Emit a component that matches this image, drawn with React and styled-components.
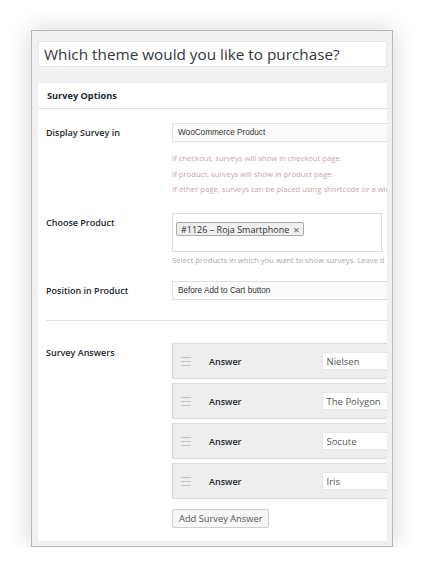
import React from "react";
import styled, { createGlobalStyle } from "styled-components";

const GlobalStyle = createGlobalStyle`
  html, body {
    margin: 0;
    padding: 0;
    background: #fff;
  }
  * {
    box-sizing: border-box;
  }
`;

const Page = styled.div`
  padding: 30px 0 0 31px;
  font-family: "Open Sans", "Liberation Sans", sans-serif;
`;

const Frame = styled.div`
  width: 362px;
  height: 517px;
  border: 1px solid #b8b8b8;
  background: #f1f1f1;
  box-shadow: 0 0 22px rgba(0, 0, 0, 0.16);
  padding: 10px 5px 5px 6px;
  display: flex;
  flex-direction: column;
`;

const TitleBox = styled.div`
  height: 26px;
  background: #fff;
  border: 1px solid #e8e8e8;
  padding-left: 5px;
  display: flex;
  align-items: center;
  font-size: 15.3px;
  color: #32373c;
  white-space: nowrap;
  overflow: hidden;
`;

const Panel = styled.div`
  margin-top: 16px;
  flex: 1;
  background: #fff;
  overflow: hidden;
`;

const PanelHeader = styled.div`
  height: 26px;
  border-bottom: 1px solid #e3e3e3;
  padding-left: 9px;
  display: flex;
  align-items: center;
  font-size: 9.2px;
  font-weight: 700;
  color: #23282d;
`;

const PanelBody = styled.div`
  padding: 14px 0 0 8px;
`;

const Row = styled.div`
  display: flex;
  align-items: flex-start;
  margin-bottom: ${(p) => p.$gap || 0}px;
`;

const Label = styled.div`
  width: 126px;
  flex: none;
  font-size: 9px;
  font-weight: 600;
  color: #23282d;
  line-height: 19px;
  padding-top: ${(p) => p.$top || 0}px;
`;

const Field = styled.div`
  flex: none;
  width: 260px;
`;

const Select = styled.div`
  height: 19px;
  width: 260px;
  border: 1px solid #e1e1e1;
  background: #fbfbfb;
  padding-left: 5px;
  display: flex;
  align-items: center;
  font-family: "Liberation Sans", Arial, sans-serif;
  font-size: 8.2px;
  color: #333;
`;

const Desc = styled.div`
  font-size: 7.7px;
  line-height: 15.5px;
  color: ${(p) => p.$tone || "#aaa"};
  white-space: nowrap;
`;

const DescList = styled.div`
  margin-top: 9px;
`;

const MultiBox = styled.div`
  width: 210px;
  height: 39px;
  border: 1px solid #dcdcdc;
  padding: 2px 3px;
`;

const Tag = styled.span`
  display: inline-flex;
  align-items: center;
  gap: 4px;
  height: 14px;
  padding: 0 3px 0 4px;
  border: 1px solid #aaa;
  border-radius: 2px;
  background: #efefef;
  font-size: 9px;
  color: #333;
`;

const TagClose = styled.span`
  font-weight: 700;
  font-size: 11px;
  line-height: 1;
  color: #888;
`;

const Separator = styled.div`
  height: 1px;
  background: #e5e5e5;
  margin: 20px 0 22px 0;
  width: 345px;
`;

const AnswerList = styled.div`
  display: flex;
  flex-direction: column;
  gap: 4px;
`;

const AnswerItem = styled.div`
  height: 36px;
  width: 260px;
  background: #eeeeee;
  border: 1px solid #dcdcdc;
  border-left-color: #d4d4d4;
  display: flex;
  align-items: center;
  padding-left: 8px;
`;

const Handle = styled.svg`
  width: 10px;
  height: 9px;
  flex: none;
`;

const AnswerLabel = styled.span`
  margin-left: 18px;
  width: 124px;
  font-size: 9px;
  font-weight: 600;
  color: #23282d;
`;

const AnswerInput = styled.div`
  height: 18px;
  width: 120px;
  background: #fff;
  border: 1px solid #e6e6e6;
  padding-left: 4px;
  display: flex;
  align-items: center;
  font-size: 9.5px;
  color: #555;
  white-space: nowrap;
`;

const AddButton = styled.button`
  margin-top: 10px;
  height: 19px;
  padding: 0 6px;
  border: 1px solid #cfcfcf;
  border-radius: 2px;
  background: #f7f7f7;
  font-family: "Open Sans", sans-serif;
  font-size: 9.3px;
  color: #555;
`;

const HandleIcon = () => (
  <Handle viewBox="0 0 10 9">
    <rect x="0" y="0" width="10" height="1" fill="#c4c4c4" />
    <rect x="0" y="4" width="10" height="1" fill="#c4c4c4" />
    <rect x="0" y="8" width="10" height="1" fill="#c4c4c4" />
  </Handle>
);

const answers = ["Nielsen", "The Polygon", "Socute", "Iris"];

export default function App() {
  return (
    <Page>
      <GlobalStyle />
      <Frame>
        <TitleBox>Which theme would you like to purchase?</TitleBox>
        <Panel>
          <PanelHeader>Survey Options</PanelHeader>
          <PanelBody>
            <Row $gap={15}>
              <Label>Display Survey in</Label>
              <Field>
                <Select>WooCommerce Product</Select>
                <DescList>
                  <Desc $tone="#bfa9a9">If checkout, surveys will show in checkout page.</Desc>
                  <Desc $tone="#bfa9a9">If product, surveys will show in product page.</Desc>
                  <Desc $tone="#bfa9a9">
                    If other page, surveys can be placed using shortcode or a widget.
                  </Desc>
                </DescList>
              </Field>
            </Row>
            <Row $gap={13}>
              <Label $top={-2}>Choose Product</Label>
              <Field>
                <MultiBox>
                  <Tag>
                    #1126 – Roja Smartphone <TagClose>×</TagClose>
                  </Tag>
                </MultiBox>
                <Desc style={{ marginTop: "1px" }}>
                  Select products in which you want to show surveys. Leave it blank for all products.
                </Desc>
              </Field>
            </Row>
            <Row>
              <Label>Position in Product</Label>
              <Field>
                <Select>Before Add to Cart button</Select>
              </Field>
            </Row>
            <Separator />
            <Row>
              <Label>Survey Answers</Label>
              <Field>
                <AnswerList>
                  {answers.map((a) => (
                    <AnswerItem key={a}>
                      <HandleIcon />
                      <AnswerLabel>Answer</AnswerLabel>
                      <AnswerInput>{a}</AnswerInput>
                    </AnswerItem>
                  ))}
                </AnswerList>
                <AddButton>Add Survey Answer</AddButton>
              </Field>
            </Row>
          </PanelBody>
        </Panel>
      </Frame>
    </Page>
  );
}
